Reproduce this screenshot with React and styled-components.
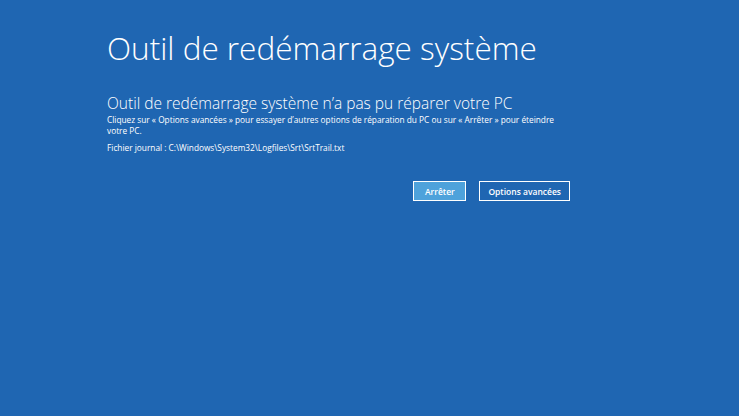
import React from "react";
import styled, { createGlobalStyle } from "styled-components";

const Global = createGlobalStyle`
  html, body { margin: 0; padding: 0; background: #1f66b2; }
  body { font-family: "Open Sans", "Noto Sans", sans-serif; color: #fff; }
`;

const Screen = styled.div`
  width: 739px;
  height: 416px;
  background: #1f66b2;
  box-sizing: border-box;
  padding: 29px 0 0 107px;
`;

const Content = styled.div`
  width: 463px;
  display: flex;
  flex-direction: column;
`;

const Title = styled.h1`
  margin: 0;
  font-weight: 300;
  font-size: 31.5px;
  line-height: 38px;
  letter-spacing: 0;
`;

const Subtitle = styled.h2`
  margin: 26px 0 0;
  font-weight: 300;
  font-size: 15.5px;
  line-height: 20px;
`;

const Body = styled.p`
  margin: ${(p) => p.$top}px 0 0;
  font-size: 8.3px;
  line-height: 11px;
  width: 455px;
`;

const Actions = styled.div`
  display: flex;
  justify-content: flex-end;
  gap: 13px;
  margin-top: 28px;
`;

const Button = styled.button`
  font-family: inherit;
  font-size: 8.5px;
  font-weight: 600;
  color: #fff;
  height: 20px;
  min-width: ${(p) => p.$w}px;
  padding: 0 8px;
  border: 1.5px solid #fff;
  background: ${(p) => (p.$primary ? "#4ea2db" : "transparent")};
  box-sizing: border-box;
`;

export default function App() {
  return (
    <>
      <Global />
      <Screen>
        <Content>
          <Title>Outil de redémarrage système</Title>
          <Subtitle>Outil de redémarrage système n’a pas pu réparer votre PC</Subtitle>
          <Body $top={1}>
            Cliquez sur « Options avancées » pour essayer d’autres options de réparation du PC ou sur « Arrêter » pour éteindre votre PC.
          </Body>
          <Body $top={6}>Fichier journal : C:\Windows\System32\Logfiles\Srt\SrtTrail.txt</Body>
          <Actions>
            <Button $primary $w={53}>Arrêter</Button>
            <Button $w={90}>Options avancées</Button>
          </Actions>
        </Content>
      </Screen>
    </>
  );
}
